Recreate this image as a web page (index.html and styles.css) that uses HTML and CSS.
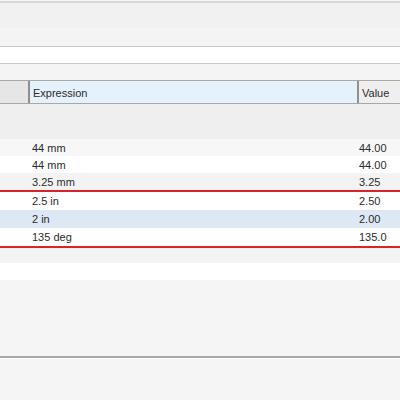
FILE: index.html
```html
<!DOCTYPE html>
<html>
<head>
<meta charset="utf-8">
<link rel="stylesheet" href="styles.css">
</head>
<body>
<div class="page">
  <div class="toolbar"><div class="tb-a"></div><div class="tb-b"></div></div>
  <div class="field"></div>
  <div class="gap"></div>
  <div class="header">
    <div class="h-first"></div>
    <div class="h-expr">Expression</div>
    <div class="h-val">Value</div>
  </div>
  <div class="group"></div>
  <div class="row r-light"><div class="c-first"></div><div class="c-expr">44 mm</div><div class="c-val">44.00</div></div>
  <div class="row r-white"><div class="c-first"></div><div class="c-expr">44 mm</div><div class="c-val">44.00</div></div>
  <div class="row r-gray"><div class="c-first"></div><div class="c-expr">3.25 mm</div><div class="c-val">3.25</div></div>
  <div class="redline"></div>
  <div class="row tall r-white"><div class="c-first"></div><div class="c-expr">2.5 in</div><div class="c-val">2.50</div></div>
  <div class="row tall r-blue"><div class="c-first"></div><div class="c-expr">2 in</div><div class="c-val">2.00</div></div>
  <div class="row tall r-white"><div class="c-first"></div><div class="c-expr">135 deg</div><div class="c-val">135.0</div></div>
  <div class="redline"></div>
  <div class="after"></div>
  <div class="white-row"></div>
  <div class="lower"></div>
  <div class="divider"></div>
  <div class="bottom"></div>
</div>
</body>
</html>
```

FILE: styles.css
```css
html, body {
  margin: 0;
  padding: 0;
  background: #f5f5f5;
}
.page {
  width: 400px;
  height: 400px;
  overflow: hidden;
  display: flex;
  flex-direction: column;
  font-family: "Liberation Sans", Arial, sans-serif;
  font-size: 11px;
  color: #2b2b2b;
}
.toolbar {
  margin-top: 1px;
  border-top: 2px solid #d8d8d8;
  border-bottom: 1px solid #c8c8c8;
  display: flex;
  flex-direction: column;
}
.tb-a { height: 25px; background: #f1f1f1; }
.tb-b { height: 18px; background: #f4f4f4; }
.field {
  height: 16px;
  background: #ffffff;
  border-bottom: 1px solid #c8c8c8;
}
.gap {
  height: 16px;
  background: #f4f4f4;
}
.header {
  height: 22px;
  border-top: 1px solid #a8a8a8;
  border-bottom: 1px solid #a8a8a8;
  display: flex;
  align-items: stretch;
}
.h-first {
  width: 28px;
  background: #e6e6e6;
  border-right: 2px solid #8f8f8f;
}
.h-expr {
  width: 324px;
  background: #e5f1fb;
  border-right: 2px solid #8f8f8f;
  padding-left: 3px;
  padding-top: 1px;
  display: flex;
  align-items: center;
}
.h-val {
  flex: 1;
  background: #efefef;
  padding-left: 3px;
  padding-top: 1px;
  display: flex;
  align-items: center;
}
.group {
  height: 35px;
  background: #efefef;
}
.row {
  height: 17px;
  display: flex;
  align-items: center;
}
.row.tall { height: 18px; }
.r-light { background: #f7f7f7; }
.r-white { background: #ffffff; }
.r-gray { background: #f3f3f3; }
.r-blue { background: #dde8f4; }
.c-first { width: 32px; }
.c-expr { width: 327px; }
.c-val { flex: 1; }
.redline {
  height: 2px;
  background: #d8232a;
  box-shadow: 0 0 1px 0.5px rgba(216, 35, 42, 0.45);
}
.after {
  height: 15px;
  background: #f3f3f3;
}
.white-row {
  height: 17px;
  background: #ffffff;
}
.lower {
  height: 76px;
  background: #f5f5f5;
}
.divider {
  height: 2px;
  background: #a8a8a8;
  border-bottom: 1px solid #ffffff;
}
.bottom {
  flex: 1;
  background: #f5f5f5;
}
```
